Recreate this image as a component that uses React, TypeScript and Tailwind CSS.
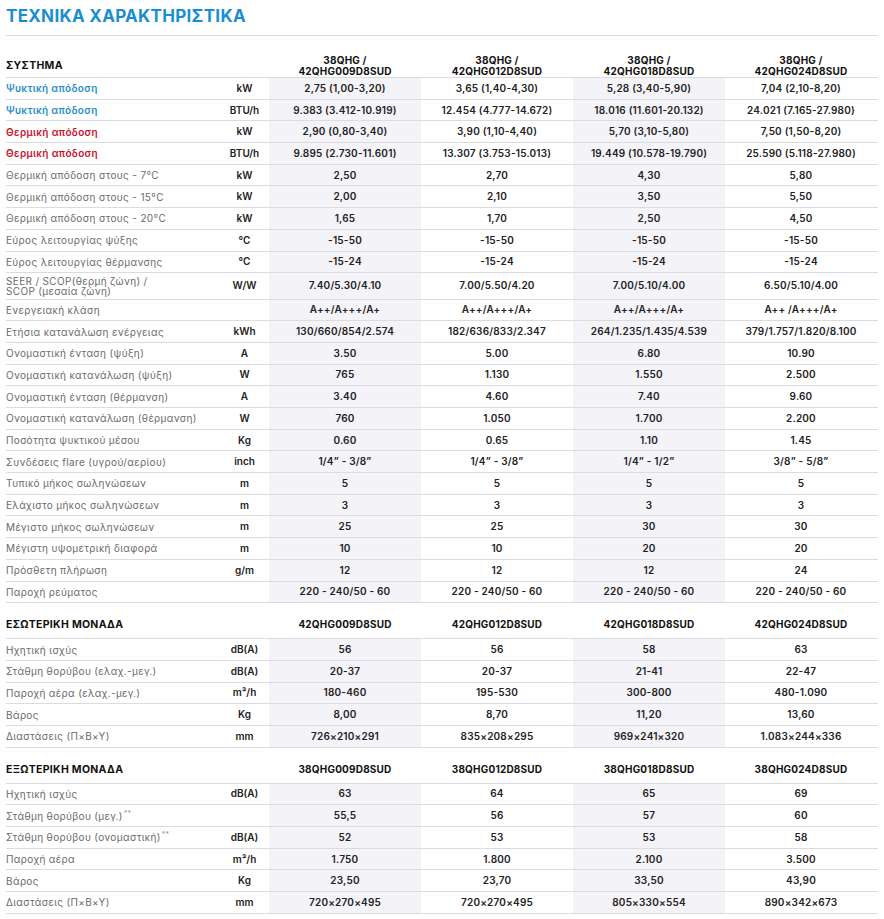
import React from "react";

type Row = { label: string; unit: string; vals: string[]; color?: "blue" | "red"; tall?: boolean; star?: boolean };

const F = { fontFamily: "Inter, 'Noto Sans', sans-serif" } as const;

const system: Row[] = [
  { label: "Ψυκτική απόδοση", unit: "kW", color: "blue", vals: ["2,75 (1,00-3,20)", "3,65 (1,40-4,30)", "5,28 (3,40-5,90)", "7,04 (2,10-8,20)"] },
  { label: "Ψυκτική απόδοση", unit: "BTU/h", color: "blue", vals: ["9.383 (3.412-10.919)", "12.454 (4.777-14.672)", "18.016 (11.601-20.132)", "24.021 (7.165-27.980)"] },
  { label: "Θερμική απόδοση", unit: "kW", color: "red", vals: ["2,90 (0,80-3,40)", "3,90 (1,10-4,40)", "5,70 (3,10-5,80)", "7,50 (1,50-8,20)"] },
  { label: "Θερμική απόδοση", unit: "BTU/h", color: "red", vals: ["9.895 (2.730-11.601)", "13.307 (3.753-15.013)", "19.449 (10.578-19.790)", "25.590 (5.118-27.980)"] },
  { label: "Θερμική απόδοση στους - 7°C", unit: "kW", vals: ["2,50", "2,70", "4,30", "5,80"] },
  { label: "Θερμική απόδοση στους - 15°C", unit: "kW", vals: ["2,00", "2,10", "3,50", "5,50"] },
  { label: "Θερμική απόδοση στους - 20°C", unit: "kW", vals: ["1,65", "1,70", "2,50", "4,50"] },
  { label: "Εύρος λειτουργίας ψύξης", unit: "°C", vals: ["-15-50", "-15-50", "-15-50", "-15-50"] },
  { label: "Εύρος λειτουργίας θέρμανσης", unit: "°C", vals: ["-15-24", "-15-24", "-15-24", "-15-24"] },
  { label: "SEER / SCOP(θερμή ζώνη) /\nSCOP (μεσαία ζώνη)", unit: "W/W", tall: true, vals: ["7.40/5.30/4.10", "7.00/5.50/4.20", "7.00/5.10/4.00", "6.50/5.10/4.00"] },
  { label: "Ενεργειακή κλάση", unit: "", vals: ["A++/A+++/A+", "A++/A+++/A+", "A++/A+++/A+", "A++ /A+++/A+"] },
  { label: "Ετήσια κατανάλωση ενέργειας", unit: "kWh", vals: ["130/660/854/2.574", "182/636/833/2.347", "264/1.235/1.435/4.539", "379/1.757/1.820/8.100"] },
  { label: "Ονομαστική ένταση (ψύξη)", unit: "A", vals: ["3.50", "5.00", "6.80", "10.90"] },
  { label: "Ονομαστική κατανάλωση (ψύξη)", unit: "W", vals: ["765", "1.130", "1.550", "2.500"] },
  { label: "Ονομαστική ένταση (θέρμανση)", unit: "A", vals: ["3.40", "4.60", "7.40", "9.60"] },
  { label: "Ονομαστική κατανάλωση (θέρμανση)", unit: "W", vals: ["760", "1.050", "1.700", "2.200"] },
  { label: "Ποσότητα ψυκτικού μέσου", unit: "Kg", vals: ["0.60", "0.65", "1.10", "1.45"] },
  { label: "Συνδέσεις flare (υγρού/αερίου)", unit: "inch", vals: ["1/4” - 3/8”", "1/4” - 3/8”", "1/4” - 1/2”", "3/8” - 5/8”"] },
  { label: "Τυπικό μήκος σωληνώσεων", unit: "m", vals: ["5", "5", "5", "5"] },
  { label: "Ελάχιστο μήκος σωληνώσεων", unit: "m", vals: ["3", "3", "3", "3"] },
  { label: "Μέγιστο μήκος σωληνώσεων", unit: "m", vals: ["25", "25", "30", "30"] },
  { label: "Μέγιστη υψομετρική διαφορά", unit: "m", vals: ["10", "10", "20", "20"] },
  { label: "Πρόσθετη πλήρωση", unit: "g/m", vals: ["12", "12", "12", "24"] },
  { label: "Παροχή ρεύματος", unit: "", vals: ["220 - 240/50 - 60", "220 - 240/50 - 60", "220 - 240/50 - 60", "220 - 240/50 - 60"] },
];

const indoor: Row[] = [
  { label: "Ηχητική ισχύς", unit: "dB(A)", vals: ["56", "56", "58", "63"] },
  { label: "Στάθμη θορύβου (ελαχ.-μεγ.)", unit: "dB(A)", vals: ["20-37", "20-37", "21-41", "22-47"] },
  { label: "Παροχή αέρα (ελαχ.-μεγ.)", unit: "m³/h", vals: ["180-460", "195-530", "300-800", "480-1.090"] },
  { label: "Βάρος", unit: "Kg", vals: ["8,00", "8,70", "11,20", "13,60"] },
  { label: "Διαστάσεις (Π×Β×Υ)", unit: "mm", vals: ["726×210×291", "835×208×295", "969×241×320", "1.083×244×336"] },
];

const outdoor: Row[] = [
  { label: "Ηχητική ισχύς", unit: "dB(A)", vals: ["63", "64", "65", "69"] },
  { label: "Στάθμη θορύβου (μεγ.)", star: true, unit: "", vals: ["55,5", "56", "57", "60"] },
  { label: "Στάθμη θορύβου (ονομαστική)", star: true, unit: "dB(A)", vals: ["52", "53", "53", "58"] },
  { label: "Παροχή αέρα", unit: "m³/h", vals: ["1.750", "1.800", "2.100", "3.500"] },
  { label: "Βάρος", unit: "Kg", vals: ["23,50", "23,70", "33,50", "43,90"] },
  { label: "Διαστάσεις (Π×Β×Υ)", unit: "mm", vals: ["720×270×495", "720×270×495", "805×330×554", "890×342×673"] },
];

const GRID = "grid grid-cols-[214px_49px_152px_152px_152px_152px] border-b border-[#dcdce0]";

function DataRow({ r }: { r: Row }) {
  const labelColor =
    r.color === "blue" ? "text-[#2a8fc9] font-semibold" : r.color === "red" ? "text-[#c8102e] font-semibold" : "text-[#6b6b6b]";
  return (
    <div className={`${GRID} ${r.tall ? "h-[26.4px]" : "h-[21.7px]"}`}>
      <div className={`flex items-center whitespace-pre-line text-[10px] leading-[10px] tracking-[0.35px] ${labelColor}`}>
        {r.label}
        {r.star && <span className="ml-[1px] -mt-[4px] text-[7px] text-[#999]">**</span>}
      </div>
      <div className="flex items-center justify-center text-[10px] font-semibold text-[#222]">{r.unit}</div>
      {r.vals.map((v, i) => (
        <div
          key={i}
          className={`flex items-center justify-center text-[10px] font-semibold tracking-[0.2px] text-[#222] ${i % 2 === 0 ? "bg-[#f3f3f8]" : ""}`}
        >
          {v}
        </div>
      ))}
    </div>
  );
}

function SectionHead({ title, cols }: { title: string; cols: string[] }) {
  return (
    <div className={`${GRID} h-[36px] items-end pb-[8px]`}>
      <div className="col-span-2 text-[10.5px] font-bold leading-[11px] tracking-[0.3px] text-[#111]">{title}</div>
      {cols.map((c, i) => (
        <div key={i} className="text-center text-[10px] font-bold leading-[11px] tracking-[0.2px] text-[#111]">
          {c}
        </div>
      ))}
    </div>
  );
}

export default function App() {
  return (
    <div className="w-[884px] min-h-[919px] bg-white px-[6px]" style={F}>
      <div className="flex h-[36px] items-start border-b border-[#dcdce0] pt-[5px]">
        <h1 className="text-[17px] font-bold leading-[22px] tracking-[0.3px] text-[#1a8fd0]">ΤΕΧΝΙΚΑ ΧΑΡΑΚΤΗΡΙΣΤΙΚΑ</h1>
      </div>
      <div className={`${GRID} h-[42px] items-end`}>
        <div className="col-span-2 flex h-[22px] items-center text-[10.5px] font-bold tracking-[0.3px] text-[#111]">ΣΥΣΤΗΜΑ</div>
        {["42QHG009D8SUD", "42QHG012D8SUD", "42QHG018D8SUD", "42QHG024D8SUD"].map((c, i) => (
          <div key={i} className="text-center text-[10px] font-bold leading-[11px] tracking-[0.2px] text-[#111]">
            38QHG /<br />
            {c}
          </div>
        ))}
      </div>
      {system.map((r, i) => (
        <DataRow key={i} r={r} />
      ))}
      <SectionHead title="ΕΣΩΤΕΡΙΚΗ ΜΟΝΑΔΑ" cols={["42QHG009D8SUD", "42QHG012D8SUD", "42QHG018D8SUD", "42QHG024D8SUD"]} />
      {indoor.map((r, i) => (
        <DataRow key={i} r={r} />
      ))}
      <SectionHead title="ΕΞΩΤΕΡΙΚΗ ΜΟΝΑΔΑ" cols={["38QHG009D8SUD", "38QHG012D8SUD", "38QHG018D8SUD", "38QHG024D8SUD"]} />
      {outdoor.map((r, i) => (
        <DataRow key={i} r={r} />
      ))}
    </div>
  );
}
